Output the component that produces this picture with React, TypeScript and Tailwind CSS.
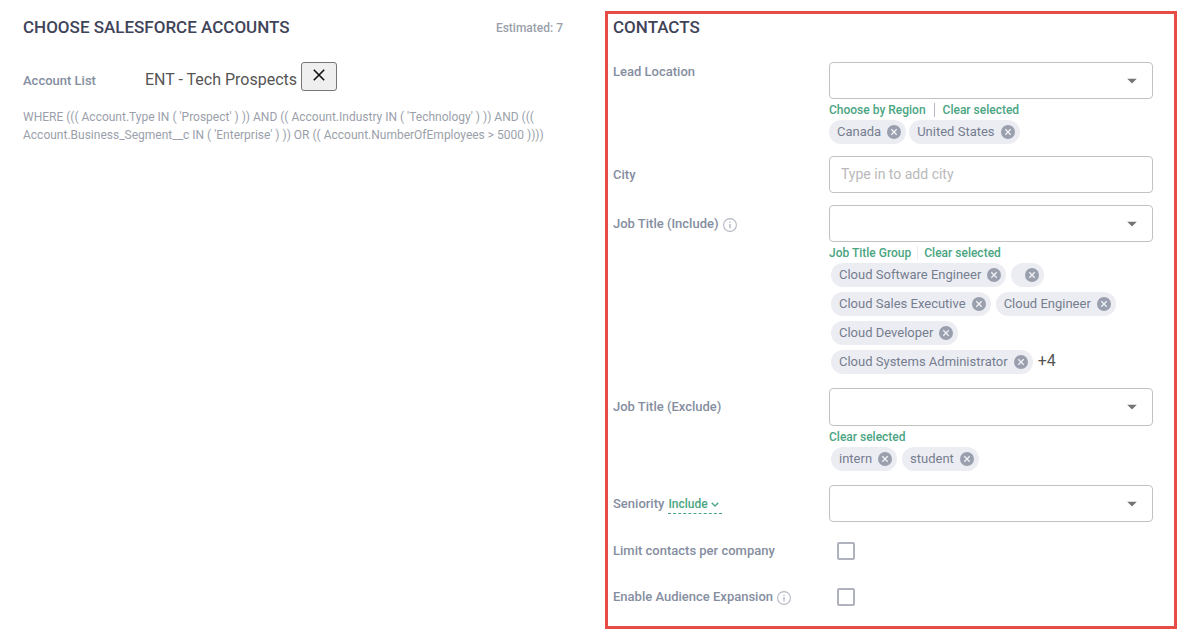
import { useId, useState } from "react";
import type { ReactNode } from "react";

function InfoIcon() {
  return (
    <svg viewBox="0 0 14 14" className="mt-0.5 h-3.5 w-3.5 shrink-0" fill="none" aria-hidden="true">
      <circle cx="7" cy="7" r="6.4" stroke="#b4b8c4" strokeWidth="1.1" />
      <path d="M7 6v4.2M7 3.7v1.3" stroke="#b4b8c4" strokeWidth="1.4" />
    </svg>
  );
}

function Chip({ name, onRemove }: { name: string; onRemove: () => void }) {
  return (
    <li className="flex h-6 items-center gap-1.5 rounded-full bg-[#ecedf3] pr-[5px] pl-2 text-[13px] leading-6 text-[#757d8f]">
      <span>{name}</span>
      <button type="button" aria-label={`Remove ${name}`} onClick={onRemove}>
        <svg viewBox="0 0 14 14" className="block h-3.5 w-3.5" aria-hidden="true">
          <circle cx="7" cy="7" r="7" fill="#9a9fad" />
          <path d="M4.3 4.3l5.4 5.4M9.7 4.3l-5.4 5.4" stroke="#f1f2f6" strokeWidth="1.3" />
        </svg>
      </button>
    </li>
  );
}

function Dropdown({ id, height = "h-[37px]" }: { id: string; height?: string }) {
  return (
    <div className="relative">
      <select
        id={id}
        className={`${height} block w-full appearance-none rounded border border-[#c2c2c2] bg-white px-3 text-sm text-[#555]`}
      >
        <option value=""></option>
      </select>
      <svg
        viewBox="0 0 10 5"
        className="pointer-events-none absolute top-1/2 right-4 h-[5px] w-2.5 -translate-y-1/2"
        aria-hidden="true"
      >
        <path d="M0 0h10L5 5z" fill="#757575" />
      </svg>
    </div>
  );
}

function Field({ children }: { children: ReactNode }) {
  return <div className="grid grid-cols-[2fr_3fr]">{children}</div>;
}

const labelText = "text-[13px] font-medium text-[#858e9f]";
const linkText = "text-[12px] font-medium text-[#4aa582]";

export default function App() {
  const id = useId();
  const [countries, setCountries] = useState(["Canada", "United States"]);
  const [included, setIncluded] = useState([
    "Cloud Software Engineer",
    "",
    "Cloud Sales Executive",
    "Cloud Engineer",
    "Cloud Developer",
    "Cloud Systems Administrator",
  ]);
  const [excluded, setExcluded] = useState(["intern", "student"]);
  const without = (list: string[], name: string) => list.filter((item) => item !== name);

  return (
    <main className="grid grid-cols-[540fr_572fr] items-start gap-[42px] bg-white pt-[11px] pr-2 pb-1 pl-[23px] font-['Roboto',sans-serif]">
      <section>
        <header className="flex h-[33px] items-center justify-between">
          <h2 className="text-[17px] font-medium text-[#3f4459]">CHOOSE SALESFORCE ACCOUNTS</h2>
          <span className="text-[12px] font-medium text-[#9b9fab]">Estimated: 7</span>
        </header>
        <div className="mt-[18px] flex items-end">
          <span className={`${labelText} w-[122px] leading-5`}>Account List</span>
          <span className="text-[16px] leading-[23px] text-[#555]">ENT - Tech Prospects</span>
          <button
            type="button"
            aria-label="Remove account list"
            className="ml-1 flex h-[29px] w-9 justify-center rounded-[3px] border border-[#767676] bg-[#efefef] pt-1.5"
          >
            <svg viewBox="0 0 12 12" className="h-3 w-3" aria-hidden="true">
              <path d="M.8.8l10.4 10.4M11.2.8L.8 11.2" stroke="#111" strokeWidth="1.6" />
            </svg>
          </button>
        </div>
        <p className="mt-[17px] text-[12px] leading-[18px] text-[#9b9fab]">
          WHERE ((( Account.Type IN ( 'Prospect' ) )) AND (( Account.Industry IN ( 'Technology' ) )) AND (((
          Account.Business_Segment__c IN ( 'Enterprise' ) )) OR (( Account.NumberOfEmployees &gt; 5000 ))))
        </p>
      </section>

      <section className="border-[3px] border-[#e84c47] pr-[21px] pb-3 pl-[5px]">
        <h2 className="text-[17px] leading-[26px] font-medium text-[#3f4459]">CONTACTS</h2>
        <form className="mt-[22px] flex flex-col gap-3">
          <Field>
            <label htmlFor={`${id}-location`} className={`${labelText} leading-5`}>
              Lead Location
            </label>
            <div>
              <Dropdown id={`${id}-location`} />
              <div className={`${linkText} flex h-[21px] items-center`}>
                <button type="button">Choose by Region</button>
                <span className="mx-2 h-3.5 w-px bg-[#b4b8c4]" />
                <button type="button" onClick={() => setCountries([])}>Clear selected</button>
              </div>
              <ul className="flex flex-wrap gap-[3px]">
                {countries.map((name) => (
                  <Chip key={name} name={name} onRemove={() => setCountries(without(countries, name))} />
                ))}
              </ul>
            </div>
          </Field>

          <Field>
            <label htmlFor={`${id}-city`} className={`${labelText} leading-[37px]`}>
              City
            </label>
            <input
              id={`${id}-city`}
              type="text"
              placeholder="Type in to add city"
              className="h-[37px] w-full rounded border border-[#c2c2c2] px-[11px] pb-0.5 text-sm text-[#555] placeholder:text-[#b9b9b9]"
            />
          </Field>

          <Field>
            <label htmlFor={`${id}-include`} className={`${labelText} flex h-[37px] items-center gap-1`}>
              Job Title (Include)
              <InfoIcon />
            </label>
            <div className="pb-0.5">
              <Dropdown id={`${id}-include`} />
              <div className={`${linkText} flex h-[21px] items-center`}>
                <button type="button">Job Title Group</button>
                <span className="mx-1.5 h-3.5 w-px bg-[#ecedf3]" />
                <button type="button" onClick={() => setIncluded([])}>Clear selected</button>
              </div>
              <ul className="flex flex-wrap gap-[5px] pl-0.5">
                {included.map((name) => (
                  <Chip key={name} name={name} onRemove={() => setIncluded(without(included, name))} />
                ))}
                <li className="text-[16px] leading-[22px] text-[#555]">+4</li>
              </ul>
            </div>
          </Field>

          <Field>
            <label htmlFor={`${id}-exclude`} className={`${labelText} leading-[38px]`}>
              Job Title (Exclude)
            </label>
            <div className="pb-0.5">
              <Dropdown id={`${id}-exclude`} height="h-[38px]" />
              <div className={`${linkText} flex h-[21px] items-center`}>
                <button type="button" onClick={() => setExcluded([])}>Clear selected</button>
              </div>
              <ul className="flex flex-wrap gap-[5px] pl-0.5">
                {excluded.map((name) => (
                  <Chip key={name} name={name} onRemove={() => setExcluded(without(excluded, name))} />
                ))}
              </ul>
            </div>
          </Field>

          <Field>
            <div className="flex h-[37px] items-center gap-1">
              <label htmlFor={`${id}-seniority`} className={labelText}>
                Seniority
              </label>
              <div className="relative">
                <select
                  aria-label="Seniority mode"
                  className={`${linkText} block h-5 w-[54px] appearance-none border-b border-dashed border-[#4aa582] pt-px`}
                >
                  <option>Include</option>
                  <option>Exclude</option>
                </select>
                <svg
                  viewBox="0 0 8 5"
                  className="pointer-events-none absolute top-2 right-[3px] h-[5px] w-2"
                  fill="none"
                  aria-hidden="true"
                >
                  <path d="M.7.7L4 4 7.3.7" stroke="#4aa582" strokeWidth="1.3" />
                </svg>
              </div>
            </div>
            <Dropdown id={`${id}-seniority`} />
          </Field>

          <Field>
            <label htmlFor={`${id}-limit`} className={`${labelText} leading-[34px]`}>
              Limit contacts per company
            </label>
            <div className="flex h-[34px] items-center pl-2">
              <input
                id={`${id}-limit`}
                type="checkbox"
                className="h-[18px] w-[18px] appearance-none rounded-[2px] border-2 border-[#b0b3be] checked:bg-[#4aa582]"
              />
            </div>
          </Field>

          <Field>
            <label htmlFor={`${id}-expansion`} className={`${labelText} flex h-[34px] items-center gap-1`}>
              Enable Audience Expansion
              <InfoIcon />
            </label>
            <div className="flex h-[34px] items-center pl-2">
              <input
                id={`${id}-expansion`}
                type="checkbox"
                className="h-[18px] w-[18px] appearance-none rounded-[2px] border-2 border-[#b0b3be] checked:bg-[#4aa582]"
              />
            </div>
          </Field>
        </form>
      </section>
    </main>
  );
}
